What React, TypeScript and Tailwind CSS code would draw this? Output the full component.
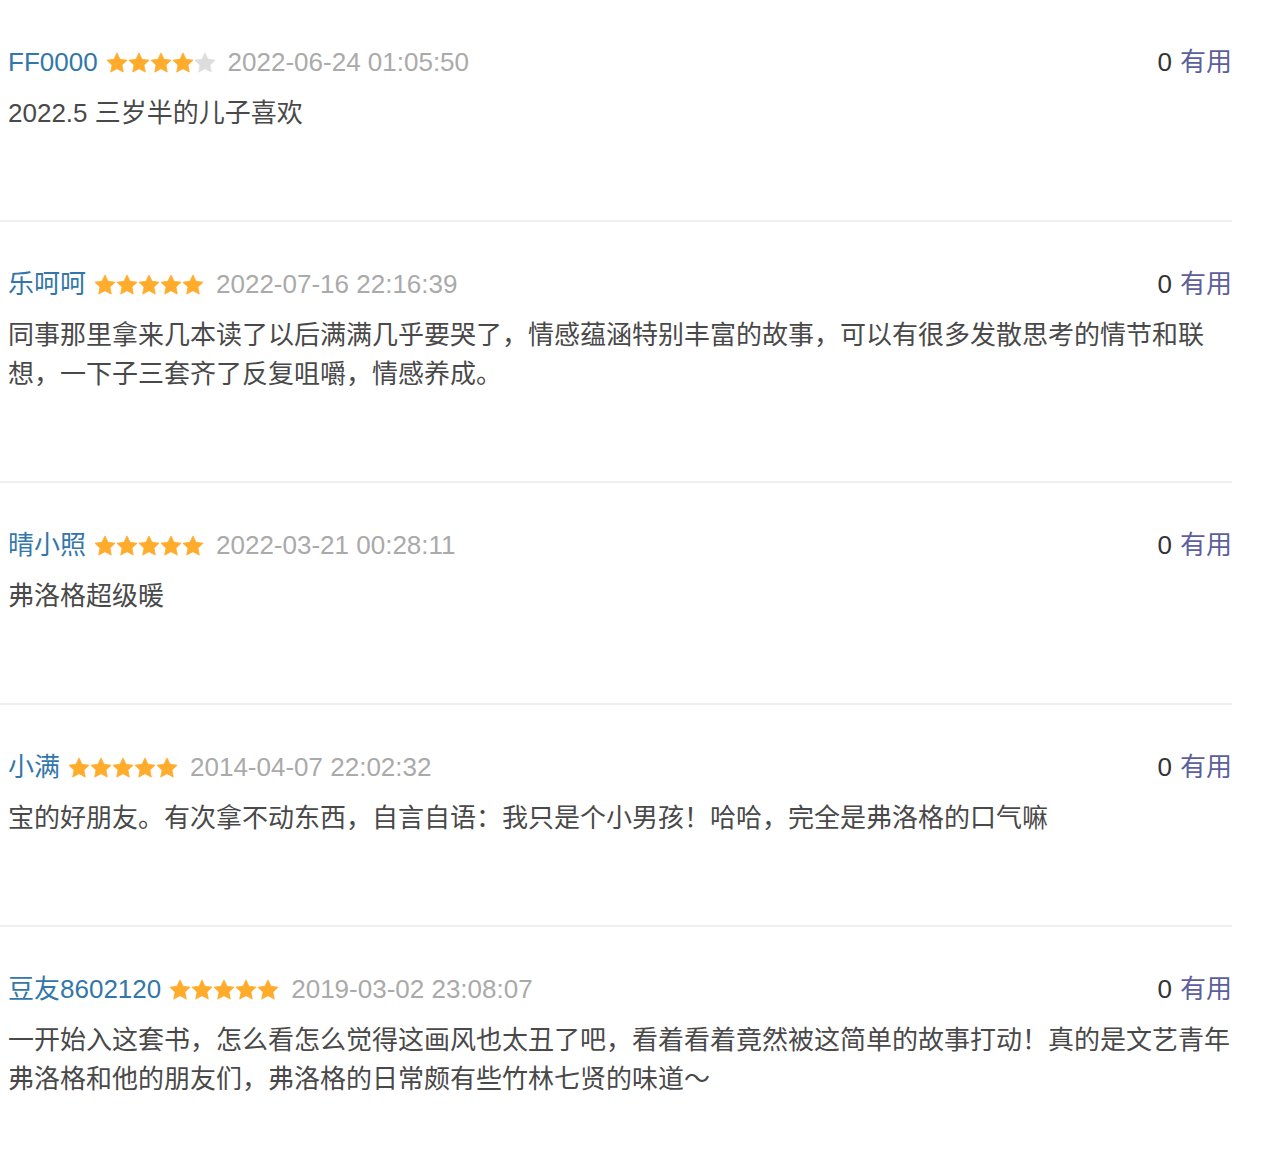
const reviews = [
  {
    name: "FF0000",
    rating: 4,
    time: "2022-06-24 01:05:50",
    votes: 0,
    text: "2022.5 三岁半的儿子喜欢",
  },
  {
    name: "乐呵呵",
    rating: 5,
    time: "2022-07-16 22:16:39",
    votes: 0,
    text: "同事那里拿来几本读了以后满满几乎要哭了，情感蕴涵特别丰富的故事，可以有很多发散思考的情节和联想，一下子三套齐了反复咀嚼，情感养成。",
  },
  {
    name: "晴小照",
    rating: 5,
    time: "2022-03-21 00:28:11",
    votes: 0,
    text: "弗洛格超级暖",
  },
  {
    name: "小满",
    rating: 5,
    time: "2014-04-07 22:02:32",
    votes: 0,
    text: "宝的好朋友。有次拿不动东西，自言自语：我只是个小男孩！哈哈，完全是弗洛格的口气嘛",
  },
  {
    name: "豆友8602120",
    rating: 5,
    time: "2019-03-02 23:08:07",
    votes: 0,
    text: "一开始入这套书，怎么看怎么觉得这画风也太丑了吧，看着看着竟然被这简单的故事打动！真的是文艺青年弗洛格和他的朋友们，弗洛格的日常颇有些竹林七贤的味道～",
  },
];

function Star({ filled }: { filled: boolean }) {
  const color = filled ? "#ffac2d" : "#dddddd";
  return (
    <svg width="22" height="22" viewBox="0 0 22 22" className="shrink-0">
      <path
        d="M11 0.9 L14.06 7.29 L21.1 8.2 L15.95 13.11 L17.3 20.1 L11 16.7 L4.7 20.1 L6.05 13.11 L0.9 8.2 L7.94 7.29 Z"
        fill={color}
        stroke={color}
        strokeWidth="0.8"
        strokeLinejoin="round"
      />
    </svg>
  );
}

export default function App() {
  return (
    <div
      className="bg-white min-h-screen text-[26px] leading-[39px]"
      style={{ fontFamily: '"Liberation Sans", "Noto Sans CJK SC", sans-serif' }}
    >
      {reviews.map((r, i) => (
        <div
          key={i}
          className={`w-[1232px] pl-[8px] pt-[43px] pb-[87px] ${i < reviews.length - 1 ? "border-b-2 border-[#efefef]" : ""}`}
        >
          <div className="flex items-center justify-between">
            <div className="flex items-center">
              <span className="text-[#3377aa]">{r.name}</span>
              <span className="ml-[8px] flex">
                {[0, 1, 2, 3, 4].map((s) => (
                  <Star key={s} filled={s < r.rating} />
                ))}
              </span>
              <span className="ml-[12px] text-[#aaaaaa]">{r.time}</span>
            </div>
            <div className="flex items-center">
              <span className="text-[#333333]">{r.votes}</span>
              <span className="ml-[8px] text-[#5c5f9c]">有用</span>
            </div>
          </div>
          <p className="mt-[12px] text-[#494949]">{r.text}</p>
        </div>
      ))}
    </div>
  );
}
